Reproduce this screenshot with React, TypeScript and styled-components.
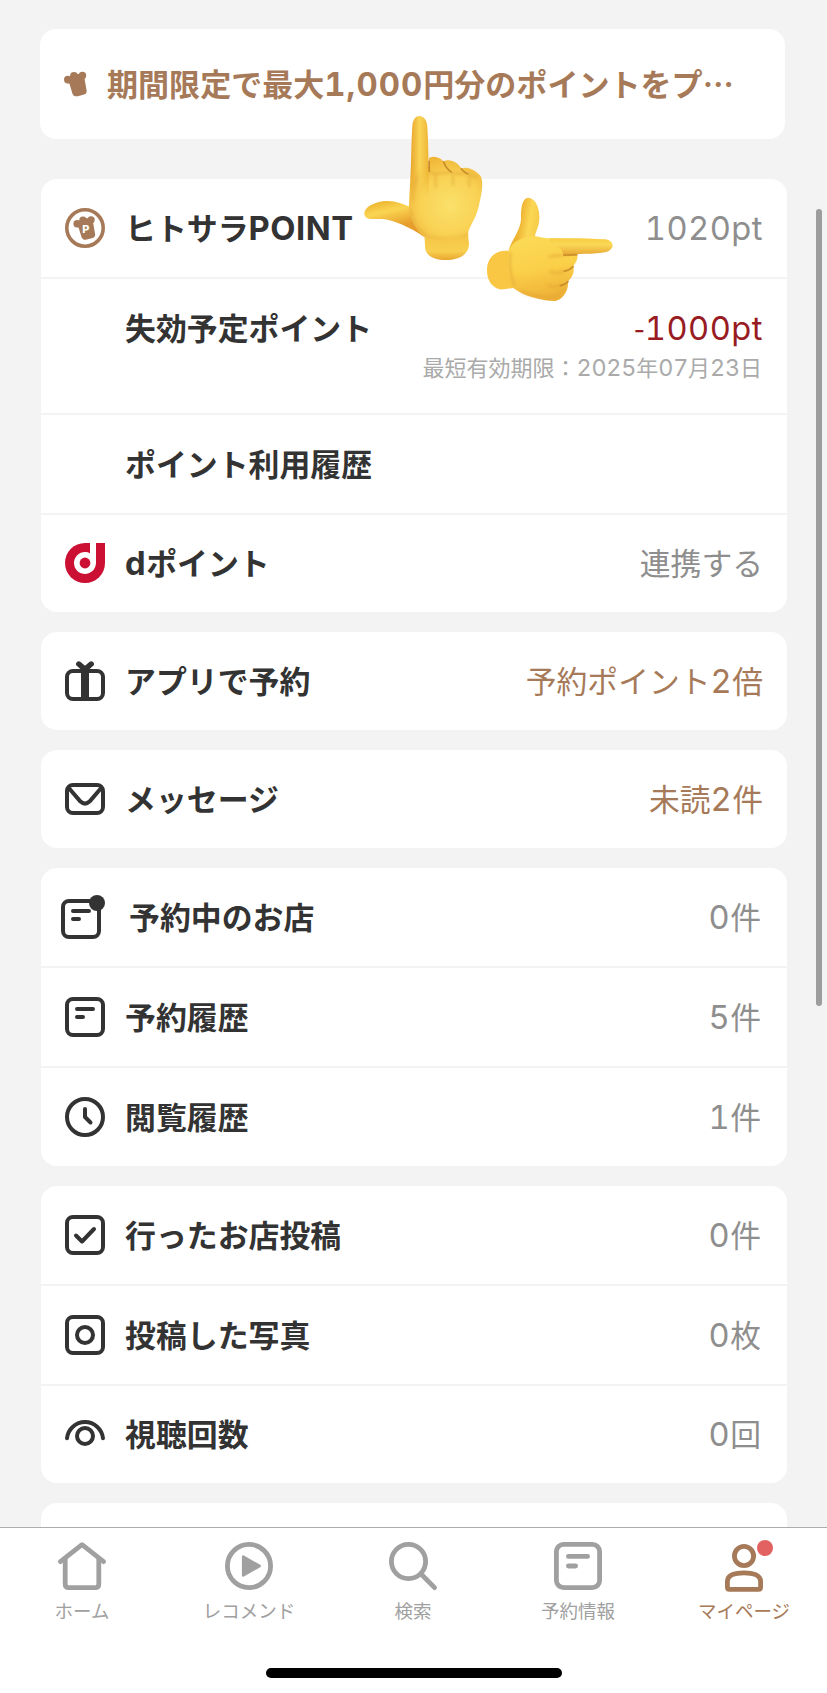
import React from "react";
import styled, { createGlobalStyle } from "styled-components";

const Global = createGlobalStyle`
  *, *::before, *::after { box-sizing: border-box; }
  html, body { margin: 0; padding: 0; overflow: hidden; }
  body {
    background: #f3f3f3;
    font-family: "Noto Sans CJK JP", sans-serif;
    color: #333;
  }
  svg { display: block; flex: none; overflow: visible; }
`;

const BROWN = "#a67a58";
const GRAY = "#8e8e8e";
const TAB_GRAY = "#a0a0a0";

const Screen = styled.div`
  position: relative;
  width: 827px;
  height: 1693px;
  display: flex;
  flex-direction: column;
  overflow: hidden;
`;

const Content = styled.main`
  flex: 1;
  min-height: 0;
  overflow: hidden;
  display: flex;
  flex-direction: column;
  gap: 20px;
  padding: 29px 40px 0 41px;
`;

const Banner = styled.section`
  flex: none;
  display: flex;
  align-items: center;
  height: 110px;
  width: 745px;
  margin: 0 0 20px -1px;
  padding-left: 24px;
  gap: 19px;
  border-radius: 16px;
  background: #fff;
  color: ${BROWN};
`;

const BannerText = styled.p`
  margin: 0;
  padding-bottom: 2px;
  font-size: 31.05px;
  line-height: 40px;
  font-weight: 700;
  white-space: nowrap;
`;

const Card = styled.section<{ $foot?: number }>`
  flex: none;
  width: 746px;
  padding-bottom: ${(p) => p.$foot ?? 0}px;
  border-radius: 16px;
  background: #fff;
  overflow: hidden;

  & > * + * { border-top: 2px solid #f3f3f3; }
`;

const Stub = styled(Card)`
  height: 98px;
`;

const Row = styled.div<{ $h: number; $wide?: boolean; $right?: number }>`
  display: flex;
  align-items: center;
  height: ${(p) => p.$h}px;
  padding: 0 ${(p) => p.$right ?? 24}px 0 ${(p) => (p.$wide ? 20 : 24)}px;
  gap: ${(p) => (p.$wide ? 24 : 20)}px;
`;

const IconBox = styled.span`
  flex: none;
  min-width: 40px;
  display: flex;
  justify-content: center;
`;

const Label = styled.span`
  flex: 1;
  padding-bottom: 2px;
  font-size: 30.9px;
  line-height: 40px;
  font-weight: 700;
  white-space: nowrap;
`;

const Value = styled.span<{ $color: string }>`
  padding-bottom: 2px;
  font-size: 30.8px;
  line-height: 40px;
  color: ${(p) => p.$color};
  white-space: nowrap;
`;

const TallRow = styled.div`
  display: flex;
  justify-content: space-between;
  height: 136px;
  padding: 28px 24px 0 84px;
`;

const ValueStack = styled.div`
  display: flex;
  flex-direction: column;
  align-items: flex-end;
`;

const Note = styled.span`
  margin-right: 1px;
  font-size: 22px;
  line-height: 34px;
  color: #aaa;
  white-space: nowrap;
`;

const LatinText = styled.span<{ $track: number }>`
  font-family: "Inter", "Liberation Sans", sans-serif;
  font-size: 1.06em;
  line-height: 1;
  letter-spacing: ${(p) => p.$track}em;
  font-variant-numeric: tabular-nums;
  font-weight: inherit;
`;

const TabBar = styled.nav`
  flex: none;
  height: 166px;
  border-top: 1px solid #adadad;
  background: #fff;
  display: flex;
  flex-direction: column;
  align-items: center;
  justify-content: space-between;
  padding-bottom: 15px;
`;

const Tabs = styled.div`
  display: grid;
  grid-template-columns: 164px 170px 158px 172px 160px;
  width: 100%;
`;

const Tab = styled.div<{ $active?: boolean }>`
  display: flex;
  flex-direction: column;
  align-items: center;
  padding-top: 14px;
  gap: 5px;
  font-size: 18.5px;
  line-height: 30px;
  white-space: nowrap;
  color: ${(p) => (p.$active ? BROWN : TAB_GRAY)};
`;

const HomeIndicator = styled.div`
  width: 296px;
  height: 10px;
  border-radius: 5px;
  background: #000;
`;

const ScrollThumb = styled.div`
  position: absolute;
  top: 209px;
  right: 5px;
  width: 6px;
  height: 797px;
  border-radius: 3px;
  background: #9d9d9d;
`;

const Stickers = styled.svg`
  position: absolute;
  left: 350px;
  top: 100px;
`;

function Mixed({ children, track = 0.015 }: { children: string; track?: number }) {
  return (
    <>
      {children.split(/([0-9A-Za-z,]+)/).map((part, i) =>
        i % 2 ? (
          <LatinText key={i} $track={track}>{part}</LatinText>
        ) : (
          part
        )
      )}
    </>
  );
}

/* ---------- icons ---------- */

const line = {
  fill: "none",
  stroke: "currentColor",
  strokeWidth: 4,
  strokeLinecap: "round" as const,
  strokeLinejoin: "round" as const,
};

const ChefShape = () => (
  <g>
    <circle cx="3.9" cy="8.6" r="3.9" />
    <circle cx="10" cy="5" r="3.9" />
    <circle cx="18.4" cy="4.6" r="3.8" />
    <path d="M2.5 11.8 L8 3 L19 3 L20.6 8 L22.6 19.4 Q23 22.6 20 23.6 L14 25.2 Q9.6 26 8.4 22.4 L5.4 12.6 Z" />
  </g>
);

const ChefIcon = () => (
  <svg width="24" height="26" viewBox="0 0 24 26" fill={BROWN}><ChefShape /></svg>
);

const PointIcon = () => (
  <svg width="40" height="40" viewBox="0 0 40 40" fill={BROWN}>
    <circle cx="20" cy="20" r="18.2" fill="none" stroke={BROWN} strokeWidth="3.6" />
    <g transform="translate(8.4 7.4) scale(.96)"><ChefShape /></g>
    <text x="20.8" y="25" textAnchor="middle" fill="#fff" fontFamily="Inter, sans-serif" fontSize="11" fontWeight="800">P</text>
  </svg>
);

const DPointIcon = () => (
  <svg width="40" height="40" viewBox="0 0 40 40">
    <path d="M20 0 H40 V20 A20 20 0 1 1 20 0 Z" fill="#cc1033" />
    <path d="M25 0 H31 V20 A11 11 0 1 1 25 10.2 Z" fill="#fff" />
    <circle cx="20" cy="20" r="5.4" fill="#cc1033" />
  </svg>
);

const GiftIcon = () => (
  <svg width="40" height="40" viewBox="0 0 40 40" {...line}>
    <rect x="2" y="10" width="36" height="28" rx="6" />
    <path d="M20 10 V38" strokeWidth="8" strokeLinecap="butt" />
    <path d="M13.8 3 L20 8.4 L26.2 3" strokeWidth="5.4" />
  </svg>
);

const MailIcon = () => (
  <svg width="40" height="32" viewBox="0 0 40 32" {...line}>
    <rect x="2" y="2" width="36" height="28" rx="6" />
    <path d="M3.8 5 L15.5 18.6 Q20 22.6 24.5 18.6 L36.2 5" />
  </svg>
);

const ReservedIcon = () => (
  <svg width="44" height="44" viewBox="0 0 44 44" {...line}>
    <rect x="2" y="6" width="36" height="36" rx="6" />
    <path d="M12 16 H28 M12 24 H18" />
    <circle cx="36" cy="8" r="8" fill="currentColor" stroke="none" />
  </svg>
);

const NoteIcon = ({ size = 40 }: { size?: number }) => (
  <svg width={size} height={size} viewBox="0 0 40 40" {...line}>
    <rect x="2" y="2" width="36" height="36" rx="6" />
    <path d="M12 12 H28 M12 20 H18" />
  </svg>
);

const ClockIcon = () => (
  <svg width="40" height="40" viewBox="0 0 40 40" {...line}>
    <circle cx="20" cy="20" r="18" />
    <path d="M20 12 V20 L25.5 25.5" />
  </svg>
);

const CheckIcon = () => (
  <svg width="40" height="40" viewBox="0 0 40 40" {...line}>
    <rect x="2" y="2" width="36" height="36" rx="6" />
    <path d="M11 20.5 L17 26.5 L29 14" />
  </svg>
);

const PhotoIcon = () => (
  <svg width="40" height="40" viewBox="0 0 40 40" {...line}>
    <rect x="2" y="2" width="36" height="36" rx="6" />
    <circle cx="20" cy="20" r="8" />
  </svg>
);

const EyeIcon = () => (
  <svg width="40" height="28" viewBox="0 0 40 28" {...line}>
    <path d="M2 18.2 A18.1 18.1 0 0 1 38 18.2" />
    <circle cx="20" cy="16" r="8" />
  </svg>
);

const HomeIcon = () => (
  <svg width="48" height="48" viewBox="0 0 48 48" {...line} strokeWidth={4.8}>
    <path d="M2.4 19.6 L24 2.6 L45.6 19.6" />
    <path d="M7.2 17 V42 Q7.2 45.6 10.8 45.6 H37.2 Q40.8 45.6 40.8 42 V17" />
  </svg>
);

const PlayIcon = () => (
  <svg width="48" height="48" viewBox="0 0 48 48">
    <circle cx="24" cy="24" r="21.6" fill="none" stroke="currentColor" strokeWidth="4.8" />
    <path d="M18.2 14.6 V33.4 L34.6 24 Z" fill="currentColor" stroke="currentColor" strokeWidth="2.6" strokeLinejoin="round" />
  </svg>
);

const SearchIcon = () => (
  <svg width="48" height="48" viewBox="0 0 48 48" {...line} strokeWidth={4.8}>
    <circle cx="19.5" cy="19.5" r="17.1" />
    <path d="M32 32 L45.6 45.6" />
  </svg>
);

const PersonIcon = () => (
  <svg width="48" height="48" viewBox="0 0 48 48" {...line} strokeWidth={4.8}>
    <circle cx="24" cy="14" r="9.6" />
    <path d="M7.4 45.2 Q7.4 47.4 9.6 47.4 H38.4 Q40.6 47.4 40.6 45.2 V39.6 C40.6 33 33 30.8 24 30.8 C15 30.8 7.4 33 7.4 39.6 Z" />
    <circle cx="45" cy="6" r="8" fill="#e26262" stroke="none" />
  </svg>
);

const HandStickers = () => (
  <Stickers width="280" height="220" viewBox="0 0 840 660" aria-hidden>
    <defs>
      <radialGradient id="upPalm" gradientUnits="userSpaceOnUse" cx="300" cy="315" r="160">
        <stop offset="0" stopColor="#fae06a" />
        <stop offset=".55" stopColor="#f9d254" />
        <stop offset="1" stopColor="#eeb033" />
      </radialGradient>
      <linearGradient id="upFinger" gradientUnits="userSpaceOnUse" x1="182" y1="0" x2="236" y2="0">
        <stop offset="0" stopColor="#e9a62d" />
        <stop offset=".5" stopColor="#f9d456" />
        <stop offset="1" stopColor="#efb534" />
      </linearGradient>
      <linearGradient id="fade" gradientUnits="userSpaceOnUse" x1="0" y1="200" x2="0" y2="290">
        <stop offset="0" stopColor="#fff" />
        <stop offset="1" stopColor="#000" />
      </linearGradient>
      <mask id="fingerFade" maskUnits="userSpaceOnUse" x="160" y="30" width="100" height="280">
        <rect x="160" y="30" width="100" height="280" fill="url(#fade)" />
      </mask>
      <linearGradient id="upThumb" gradientUnits="userSpaceOnUse" x1="100" y1="300" x2="120" y2="385">
        <stop offset="0" stopColor="#edb52f" />
        <stop offset=".4" stopColor="#fad552" />
        <stop offset="1" stopColor="#e79d2c" />
      </linearGradient>
      <linearGradient id="sidePalm" gradientUnits="userSpaceOnUse" x1="540" y1="390" x2="580" y2="605">
        <stop offset="0" stopColor="#fbdc5a" />
        <stop offset=".55" stopColor="#fbcf48" />
        <stop offset="1" stopColor="#edae35" />
      </linearGradient>
      <linearGradient id="sideThumb" gradientUnits="userSpaceOnUse" x1="510" y1="350" x2="570" y2="360">
        <stop offset="0" stopColor="#eeb331" />
        <stop offset=".5" stopColor="#fbd755" />
        <stop offset="1" stopColor="#f6ca48" />
      </linearGradient>
      <linearGradient id="sideFinger" gradientUnits="userSpaceOnUse" x1="0" y1="415" x2="0" y2="463">
        <stop offset="0" stopColor="#f7cd43" />
        <stop offset=".4" stopColor="#fbd856" />
        <stop offset="1" stopColor="#e9a936" />
      </linearGradient>
      <linearGradient id="wrist" gradientUnits="userSpaceOnUse" x1="0" y1="400" x2="0" y2="482">
        <stop offset="0" stopColor="#f5c445" />
        <stop offset=".65" stopColor="#f8cf50" />
        <stop offset="1" stopColor="#e7a32c" />
      </linearGradient>
      <filter id="soft" x="-20%" y="-20%" width="140%" height="140%">
        <feGaussianBlur stdDeviation="4" />
      </filter>
      <filter id="crease" x="-20%" y="-20%" width="140%" height="140%">
        <feGaussianBlur stdDeviation="1.5" />
      </filter>
    </defs>

    <path d="M222 380 L355 370 Q353 405 357 430 C358 465 325 480 287 480 C252 480 224 466 225 438 Z" fill="url(#wrist)" />
    <path d="M184 322 C155 310 130 299 98 304 C65 309 42 325 43 342 C45 361 69 357 96 357 C130 359 180 382 222 410 L250 370 Z" fill="url(#upThumb)" />
    <path d="M183 200 L237 200 L237 174 C255 165 272 174 280 184 C302 174 326 191 334 205 C354 197 382 213 393 230 C402 252 393 290 386 320 C378 354 361 375 354 397 C320 425 250 423 222 410 C195 387 178 350 177 320 C178 290 180 256 183 200 Z" fill="url(#upPalm)" />
    <path mask="url(#fingerFade)" d="M181 290 C183 190 184 125 187 77 C189 57 198 48 208 48 C222 49 231 61 232 80 C235 125 235 174 237 223 L237 290 Z" fill="url(#upFinger)" />
    <g fill="none" stroke="#b8791f" strokeWidth="5" strokeLinecap="round" opacity=".75" filter="url(#crease)">
      <path d="M281 186 Q288 206 304 216" />
      <path d="M334 207 Q342 217 354 222" />
      <path d="M237 184 L238 214" />
    </g>
    <g fill="none" stroke="#dfa436" strokeWidth="6" filter="url(#soft)" opacity=".6">
      <path d="M240 218 C260 226 300 212 325 222 C350 216 365 224 382 235" />
      <path d="M257 222 V264 M309 224 V258 M358 228 V262" />
      <path d="M203 228 Q188 260 188 306" />
      <path d="M182 328 Q190 382 230 408" />
      <path d="M228 408 Q290 424 352 400" opacity=".5" />
    </g>

    <path d="M478 453 C445 447 413 467 411 506 C409 548 434 571 463 568 Q478 565 495 563 L530 500 Z" fill="#f9c743" />
    <path d="M476 452 C485 417 509 397 513 359 C512 325 517 294 534 293 C556 292 570 326 568 356 C567 381 557 394 555 408 L580 450 L500 500 Z" fill="url(#sideThumb)" />
    <path d="M476 453 C484 430 504 413 554 408 C585 416 612 415 640 416 L682 462 C685 478 675 492 670 498 C674 518 667 533 654 544 C657 575 635 600 616 603 C570 602 520 588 490 564 C469 532 466 484 476 453 Z" fill="url(#sidePalm)" />
    <path d="M600 415 C660 414 716 414 768 418 C794 424 795 448 769 456 C732 464 681 460 639 465 Q641 442 600 432 Z" fill="url(#sideFinger)" />
    <g fill="none" stroke="#bd7c24" strokeWidth="6" strokeLinecap="round" opacity=".7" filter="url(#crease)">
      <path d="M680 464 L642 466" />
      <path d="M669 500 Q657 512 643 514" />
      <path d="M654 545 Q645 554 631 557" />
    </g>
    <g fill="none" stroke="#e0a135" strokeWidth="7" filter="url(#soft)" opacity=".6">
      <path d="M639 466 Q611 465 596 472 M642 512 Q625 525 598 513 M630 556 Q615 564 592 555" />
      <path d="M482 456 Q472 505 494 556" />
      <path d="M512 574 Q560 593 612 590 Q630 584 644 563" />
    </g>
  </Stickers>
);

/* ---------- page ---------- */

type Item = {
  icon?: React.ReactNode;
  label: string;
  value?: string;
  color?: string;
  right?: number;
  h: number;
  wide?: boolean;
};

const MenuRow = ({ icon, label, value, color = GRAY, right, h, wide }: Item) => (
  <Row $h={h} $wide={wide} $right={right}>
    <IconBox>{icon}</IconBox>
    <Label><Mixed>{label}</Mixed></Label>
    {value && <Value $color={color}><Mixed>{value}</Mixed></Value>}
  </Row>
);

const groups: Item[][] = [
  [{ icon: <GiftIcon />, label: "アプリで予約", value: "予約ポイント2倍", color: BROWN, h: 98 }],
  [{ icon: <MailIcon />, label: "メッセージ", value: "未読2件", color: BROWN, h: 98 }],
  [
    { icon: <ReservedIcon />, label: "予約中のお店", value: "0件", right: 26, h: 98, wide: true },
    { icon: <NoteIcon />, label: "予約履歴", value: "5件", right: 26, h: 100 },
    { icon: <ClockIcon />, label: "閲覧履歴", value: "1件", right: 26, h: 100 },
  ],
  [
    { icon: <CheckIcon />, label: "行ったお店投稿", value: "0件", right: 26, h: 98 },
    { icon: <PhotoIcon />, label: "投稿した写真", value: "0枚", right: 26, h: 100 },
    { icon: <EyeIcon />, label: "視聴回数", value: "0回", right: 26, h: 98 },
  ],
];

export default function App() {
  return (
    <Screen>
      <Global />
      <Content>
        <Banner>
          <ChefIcon />
          <BannerText><Mixed track={0.03}>期間限定で最大1,000円分のポイントをプ…</Mixed></BannerText>
        </Banner>

        <Card $foot={1}>
          <MenuRow icon={<PointIcon />} label="ヒトサラPOINT" value="1020pt" h={98} />
          <TallRow>
            <Label>失効予定ポイント</Label>
            <ValueStack>
              <Value $color="#981b22"><Mixed>-1000pt</Mixed></Value>
              <Note><Mixed track={-0.008}>最短有効期限：2025年07月23日</Mixed></Note>
            </ValueStack>
          </TallRow>
          <MenuRow label="ポイント利用履歴" h={100} />
          <MenuRow icon={<DPointIcon />} label="dポイント" value="連携する" h={98} />
        </Card>

        {groups.map((items, i) => (
          <Card key={i} $foot={i === groups.length - 1 ? 1 : 0}>
            {items.map((item) => <MenuRow key={item.label} {...item} />)}
          </Card>
        ))}
        <Stub />
      </Content>

      <TabBar>
        <Tabs>
          <Tab><HomeIcon />ホーム</Tab>
          <Tab><PlayIcon />レコメンド</Tab>
          <Tab><SearchIcon />検索</Tab>
          <Tab><NoteIcon size={48} />予約情報</Tab>
          <Tab $active><PersonIcon />マイページ</Tab>
        </Tabs>
        <HomeIndicator />
      </TabBar>

      <ScrollThumb />
      <HandStickers />
    </Screen>
  );
}
